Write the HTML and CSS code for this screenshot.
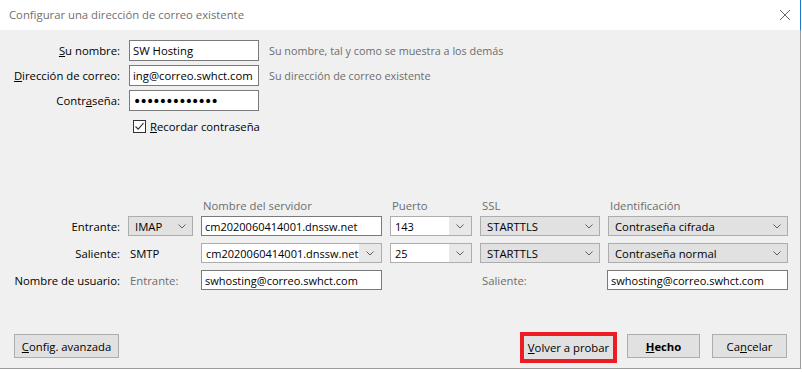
FILE: index.html
```html
<!DOCTYPE html>
<html lang="es">
<head>
    <meta charset="UTF-8">
    <title>Configurar una dirección de correo existente</title>
    <link rel="stylesheet" href="styles.css">
</head>
<body>
    <div class="window">
        <div class="titlebar">
            <span class="title">Configurar una dirección de correo existente</span>
            <svg class="close" width="10" height="10" viewBox="0 0 10 10">
                <path d="M0 0 L10 10 M10 0 L0 10" stroke="#666" stroke-width="1" fill="none"/>
            </svg>
        </div>

        <div class="content">
            <div class="cuenta">
                <label class="etiqueta"><u>S</u>u nombre:</label>
                <input class="campo" type="text" value="SW Hosting">
                <span class="ayuda">Su nombre, tal y como se muestra a los demás</span>

                <label class="etiqueta"><u>D</u>irección de correo:</label>
                <input class="campo" type="text" value="ing@correo.swhct.com">
                <span class="ayuda">Su dirección de correo existente</span>

                <label class="etiqueta">Contr<u>a</u>seña:</label>
                <input class="campo clave" type="password" value="swhosting2020">
                <span></span>

                <span></span>
                <label class="recordar">
                    <svg width="13" height="13" viewBox="0 0 13 13">
                        <rect x="0.5" y="0.5" width="12" height="12" fill="#fff" stroke="#333"/>
                        <path d="M2.5 6.5 L5.2 9.2 L10.5 3.2" fill="none" stroke="#333" stroke-width="1.1"/>
                    </svg>
                    <span><u>R</u>ecordar contraseña</span>
                </label>
            </div>

            <div class="servidores">
                <span></span>
                <span></span>
                <span class="cabecera">Nombre del servidor</span>
                <span class="cabecera">Puerto</span>
                <span class="cabecera">SSL</span>
                <span class="cabecera">Identificación</span>

                <span class="etiqueta">Entrante:</span>
                <div class="lista">
                    <span>IMAP</span>
                    <svg class="flecha" viewBox="0 0 8 5"><path d="M0.5 0.5 L4 4 L7.5 0.5"/></svg>
                </div>
                <input class="campo" type="text" value="cm2020060414001.dnssw.net">
                <div class="combo">
                    <span class="valor">143</span>
                    <span class="boton-combo"><svg class="flecha" viewBox="0 0 8 5"><path d="M0.5 0.5 L4 4 L7.5 0.5"/></svg></span>
                </div>
                <div class="lista">
                    <span>STARTTLS</span>
                    <svg class="flecha" viewBox="0 0 8 5"><path d="M0.5 0.5 L4 4 L7.5 0.5"/></svg>
                </div>
                <div class="lista">
                    <span>Contraseña cifrada</span>
                    <svg class="flecha" viewBox="0 0 8 5"><path d="M0.5 0.5 L4 4 L7.5 0.5"/></svg>
                </div>

                <span class="etiqueta">Saliente:</span>
                <span class="texto">SMTP</span>
                <div class="combo">
                    <span class="valor">cm2020060414001.dnssw.net</span>
                    <span class="boton-combo"><svg class="flecha" viewBox="0 0 8 5"><path d="M0.5 0.5 L4 4 L7.5 0.5"/></svg></span>
                </div>
                <div class="combo">
                    <span class="valor">25</span>
                    <span class="boton-combo"><svg class="flecha" viewBox="0 0 8 5"><path d="M0.5 0.5 L4 4 L7.5 0.5"/></svg></span>
                </div>
                <div class="lista">
                    <span>STARTTLS</span>
                    <svg class="flecha" viewBox="0 0 8 5"><path d="M0.5 0.5 L4 4 L7.5 0.5"/></svg>
                </div>
                <div class="lista">
                    <span>Contraseña normal</span>
                    <svg class="flecha" viewBox="0 0 8 5"><path d="M0.5 0.5 L4 4 L7.5 0.5"/></svg>
                </div>

                <span class="etiqueta">Nombre de usuario:</span>
                <span class="texto gris">Entrante:</span>
                <input class="campo" type="text" value="swhosting@correo.swhct.com">
                <span></span>
                <span class="texto gris">Saliente:</span>
                <input class="campo corrido" type="text" value="swhosting@correo.swhct.com">
            </div>

            <div class="acciones">
                <button class="boton avanzada"><u>C</u>onfig. avanzada</button>
                <span class="espacio"></span>
                <span class="marca">
                    <button class="boton probar"><u>V</u>olver a probar</button>
                </span>
                <button class="boton hecho"><u>H</u>echo</button>
                <button class="boton cancelar">Ca<u>n</u>celar</button>
            </div>
        </div>
    </div>
</body>
</html>
```

FILE: styles.css
```css
*{
    margin: 0;
    padding: 0;
    box-sizing: border-box;
}
body{
    background-color: #fff;
    font-family: "Open Sans", sans-serif;
    font-size: 11.3px;
    color: #000;
}
.window{
    width: 801px;
    height: 369px;
    display: flex;
    flex-direction: column;
}
.titlebar{
    height: 30px;
    flex: none;
    background-color: #fff;
    border-right: 1px solid #1979ca;
    display: flex;
    align-items: center;
    justify-content: space-between;
    padding: 0 10px 0 9px;
}
.title{
    color: #707070;
    margin-top: -1px;
}
.close{
    margin-top: -1px;
}
.content{
    flex: 1;
    background-color: #f0f0f0;
    border-right: 1px solid #9b9b9b;
    border-bottom: 1px solid #9b9b9b;
    display: flex;
    flex-direction: column;
    padding: 10px 13px 10px 0;
}

/* datos de la cuenta */
.cuenta{
    display: grid;
    grid-template-columns: 120px 130px auto;
    grid-auto-rows: 21px;
    column-gap: 9px;
    row-gap: 4px;
    align-items: center;
}
.etiqueta{
    text-align: right;
    white-space: nowrap;
}
.ayuda{
    color: #6d6d6d;
    margin-left: 1px;
    white-space: nowrap;
    font-size: 10.8px;
}
.campo{
    height: 21px;
    width: 100%;
    border: 1px solid #7a7a7a;
    background-color: #fff;
    padding: 0 3px;
    font: inherit;
    color: #000;
    outline: none;
}
.clave{
    font-family: "DejaVu Sans", sans-serif;
    font-size: 14px;
    letter-spacing: -1.8px;
}
.recordar{
    grid-column: 2 / 4;
    display: flex;
    align-items: center;
    gap: 4px;
    margin-left: 4px;
    margin-top: 2px;
    white-space: nowrap;
}
.recordar svg{
    display: block;
}

/* servidores */
.servidores{
    display: grid;
    grid-template-columns: 120px 65px 181px 82px 120px 180px;
    grid-template-rows: 16px 20px 20px 20px;
    column-gap: 8px;
    row-gap: 7px;
    align-items: center;
    margin-top: 57px;
}
.servidores .campo{
    height: 20px;
    font-size: 11px;
}
.cabecera{
    color: #6d6d6d;
    padding-left: 2px;
    white-space: nowrap;
    align-self: end;
    margin-bottom: -4px;
}
.texto{
    padding-left: 2px;
    white-space: nowrap;
}
.gris{
    color: #6d6d6d;
}
.corrido{
    margin-left: -1px;
    width: 181px;
}
.lista{
    height: 20px;
    border: 1px solid #adadad;
    background-color: #e1e1e1;
    display: flex;
    align-items: center;
    justify-content: space-between;
    padding: 0 6px 0 6px;
    white-space: nowrap;
}
.flecha{
    width: 8px;
    height: 5px;
    display: block;
}
.flecha path{
    fill: none;
    stroke: #606060;
    stroke-width: 1;
}
.combo{
    height: 20px;
    border: 1px solid #adadad;
    background-color: #fff;
    display: flex;
}
.combo .valor{
    flex: 1;
    display: flex;
    align-items: center;
    padding-left: 4px;
    white-space: nowrap;
    overflow: hidden;
    font-size: 11px;
}
.boton-combo{
    width: 22px;
    flex: none;
    background-color: #e8e8e8;
    display: flex;
    align-items: center;
    justify-content: center;
}

/* botones */
.acciones{
    margin-top: auto;
    display: flex;
    align-items: flex-start;
    padding-left: 14px;
    height: 24px;
}
.espacio{
    flex: 1;
}
.boton{
    height: 24px;
    border: 1px solid #adadad;
    background-color: #e1e1e1;
    font: inherit;
    color: #000;
    white-space: nowrap;
}
.avanzada{
    width: 105px;
}
.marca{
    width: 97px;
    height: 31px;
    margin-top: -2px;
    border: 4px solid #ed1c24;
    display: flex;
}
.probar{
    width: 100%;
    height: 100%;
    border: none;
}
.hecho{
    width: 73px;
    margin-left: 10px;
    font-weight: bold;
}
.cancelar{
    width: 75px;
    margin-left: 12px;
}
```
